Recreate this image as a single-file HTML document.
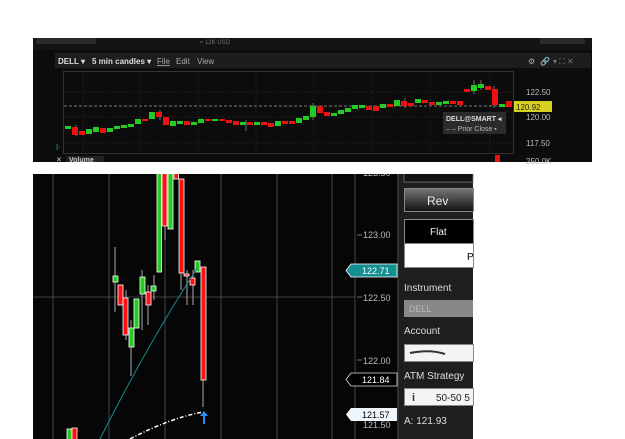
<!DOCTYPE html>
<html><head><meta charset="utf-8"><style>
body{margin:0;width:625px;height:439px;background:#fff;position:relative;overflow:hidden;font-family:"Liberation Sans",sans-serif}
.a{position:absolute}
</style></head><body>
<svg class="a" style="left:0;top:0" width="625" height="439" font-family="Liberation Sans, sans-serif">
<!-- bottom panel -->
<rect x="33" y="174" width="440" height="265" fill="#060606"/>
<g stroke="#555" stroke-width="0.8">
<line x1="53" y1="174" x2="53" y2="439"/><line x1="109" y1="174" x2="109" y2="439"/><line x1="165" y1="174" x2="165" y2="439"/><line x1="221" y1="174" x2="221" y2="439"/><line x1="277" y1="174" x2="277" y2="439"/><line x1="332" y1="174" x2="332" y2="439"/>
<line x1="33" y1="297" x2="355" y2="297"/>
</g>
<line x1="355" y1="174" x2="355" y2="439" stroke="#444"/>
<g stroke="#aaa" stroke-width="1">
<line x1="115" y1="247" x2="115" y2="312"/><line x1="131" y1="320" x2="131" y2="376"/><line x1="126" y1="290" x2="126" y2="340"/><line x1="142" y1="270" x2="142" y2="330"/><line x1="148" y1="285" x2="148" y2="325"/><line x1="154" y1="275" x2="154" y2="300"/><line x1="165" y1="180" x2="165" y2="240"/><line x1="181" y1="270" x2="181" y2="290"/><line x1="187" y1="270" x2="187" y2="305"/><line x1="193" y1="270" x2="193" y2="305"/><line x1="203" y1="272" x2="203" y2="407"/>
</g>
<g stroke="#fff" stroke-width="0.8">
<rect x="113" y="276" width="5" height="6" fill="#2c2"/>
<rect x="118" y="285" width="5" height="20" fill="#f11"/>
<rect x="123" y="298" width="5" height="37" fill="#f11"/>
<rect x="129" y="328" width="5" height="19" fill="#2c2"/>
<rect x="134" y="299" width="5" height="29" fill="#2c2"/>
<rect x="140" y="277" width="5" height="17" fill="#2c2"/>
<rect x="146" y="292" width="5" height="13" fill="#f11"/>
<rect x="151" y="286" width="5" height="5" fill="#2c2"/>
<rect x="157" y="168" width="4.5" height="104" fill="#2c2"/>
<rect x="162" y="168" width="5" height="58" fill="#f11"/>
<rect x="168" y="168" width="5" height="61" fill="#2c2"/>
<rect x="174" y="168" width="4.5" height="11" fill="#f11"/>
<rect x="179" y="179" width="5" height="94" fill="#f11"/>
<rect x="184" y="274" width="5" height="2" fill="#f11"/>
<rect x="190" y="278" width="5" height="7" fill="#f11"/>
<rect x="195" y="261" width="5" height="11" fill="#2c2"/>
<rect x="201" y="267" width="5" height="113" fill="#f11"/>
<rect x="67" y="429" width="5" height="12" fill="#2c2"/>
<rect x="72" y="428" width="5" height="12" fill="#f11"/>
</g>
<path d="M100 439 Q150 340 198 267" stroke="#1a8a8a" fill="none" stroke-width="1"/>
<path d="M130 439 Q170 418 203 412" stroke="#fff" fill="none" stroke-width="1.5" stroke-dasharray="4,2,1,2"/>
<path d="M204 411 L200 416 L203 416 L203 424 L205 424 L205 416 L208 416 Z" fill="#2a8ef0"/>
<rect x="356" y="174" width="42" height="265" fill="#060606"/>
<line x1="398" y1="174" x2="398" y2="439" stroke="#555"/>
<g fill="#bbb" font-size="9"><text x="363" y="238">123.00</text><text x="363" y="301">122.50</text><text x="363" y="364">122.00</text><text x="363" y="428">121.50</text><text x="363" y="176">123.50</text></g>
<g stroke="#888" stroke-width="0.8"><line x1="357" y1="235" x2="362" y2="235"/><line x1="357" y1="297" x2="362" y2="297"/><line x1="357" y1="360" x2="362" y2="360"/></g>
<path d="M346 270.5 L351 264 L397 264 L397 277 L351 277 Z" fill="#159090" stroke="#fff" stroke-width="0.8"/>
<text x="362" y="274" font-size="9" fill="#fff">122.71</text>
<path d="M346 379.5 L351 373 L397 373 L397 386 L351 386 Z" fill="#000" stroke="#ddd" stroke-width="0.8"/>
<text x="362" y="383" font-size="9" fill="#fff">121.84</text>
<path d="M346 414.5 L351 408 L397 408 L397 421 L351 421 Z" fill="#eef5fb"/>
<text x="362" y="418" font-size="9" fill="#000">121.57</text>
<!-- right panel -->
<rect x="399" y="174" width="74" height="265" fill="#1e1e1e"/>
<rect x="404" y="170" width="69" height="12" fill="#111" stroke="#777" stroke-width="0.8"/>
<defs><linearGradient id="g" x1="0" y1="0" x2="0" y2="1"><stop offset="0" stop-color="#777"/><stop offset="1" stop-color="#111"/></linearGradient></defs>
<rect x="404.5" y="188.5" width="69" height="23" fill="url(#g)" stroke="#888"/>
<text x="427" y="205" font-size="12" fill="#eee">Rev</text>
<rect x="404.5" y="219.5" width="69" height="24" fill="#000" stroke="#888"/>
<text x="430" y="235" font-size="10" fill="#eee">Flat</text>
<rect x="404.5" y="243.5" width="69" height="24" fill="#fff" stroke="#888"/>
<text x="467" y="260" font-size="10" fill="#000">P</text>
<text x="404" y="291" font-size="10" fill="#ddd">Instrument</text>
<rect x="404" y="300" width="69" height="17" fill="#888"/>
<text x="409" y="312" font-size="9" fill="#bbb">DELL</text>
<text x="404" y="334" font-size="10" fill="#ddd">Account</text>
<rect x="404.5" y="344.5" width="69" height="17" fill="#f4f4f4" stroke="#888"/>
<path d="M410 353 Q430 349 445 354" stroke="#333" stroke-width="2" fill="none"/>
<text x="404" y="379" font-size="10" fill="#ddd">ATM Strategy</text>
<rect x="404.5" y="388.5" width="69" height="17" fill="#f4f4f4" stroke="#888"/>
<text x="412" y="401" font-size="11" font-weight="bold" fill="#333">i</text>
<text x="436" y="401" font-size="10" fill="#222">50-50  5</text>
<text x="404" y="424" font-size="10" fill="#ddd">A:  121.93</text>
<!-- white gap -->
<rect x="0" y="162" width="625" height="12" fill="#fff"/>
<!-- top panel -->
<rect x="33" y="38" width="559" height="124" fill="#0c0c0c"/>
<rect x="33" y="38" width="559" height="12" fill="#141414"/>
<rect x="36" y="38" width="60" height="6" rx="2" fill="#2a2a2a"/>
<rect x="540" y="38" width="45" height="6" rx="2" fill="#2a2a2a"/>
<text x="200" y="44" font-size="6" fill="#777">≈ 12K USD</text>
<rect x="55" y="53" width="536" height="15" fill="#1d1d1d"/>
<text x="58" y="64" font-size="8" font-weight="bold" fill="#ddd">DELL ▾</text>
<text x="92" y="64" font-size="8" font-weight="bold" fill="#ddd">5 min candles ▾</text>
<text x="157" y="64" font-size="8" fill="#aaa" text-decoration="underline">File</text>
<text x="176" y="64" font-size="8" fill="#aaa">Edit</text>
<text x="197" y="64" font-size="8" fill="#aaa">View</text>
<text x="528" y="64" font-size="8" fill="#aaa">⚙</text>
<text x="540" y="64" font-size="8" fill="#4c4">🔗</text>
<text x="553" y="64" font-size="8" fill="#777">▾ ⛶ ✕</text>
<rect x="63.5" y="71.5" width="450" height="82" fill="none" stroke="#333"/>
<g stroke="#2a2a2a" stroke-dasharray="1,2">
<line x1="83" y1="72" x2="83" y2="153"/><line x1="140" y1="72" x2="140" y2="153"/><line x1="198" y1="72" x2="198" y2="153"/><line x1="256" y1="72" x2="256" y2="153"/><line x1="314" y1="72" x2="314" y2="153"/><line x1="372" y1="72" x2="372" y2="153"/><line x1="430" y1="72" x2="430" y2="153"/><line x1="490" y1="72" x2="490" y2="153"/>
<line x1="64" y1="92" x2="513" y2="92"/><line x1="64" y1="117" x2="513" y2="117"/><line x1="64" y1="143" x2="513" y2="143"/>
</g>
<line x1="64" y1="106" x2="513" y2="106" stroke="#777" stroke-dasharray="3,2"/>
<g stroke="#999" stroke-width="0.7">
<line x1="76" y1="125" x2="76" y2="136"/><line x1="160" y1="110" x2="160" y2="120"/><line x1="313" y1="103" x2="313" y2="120"/><line x1="246" y1="120" x2="246" y2="131"/><line x1="474" y1="80" x2="474" y2="94"/><line x1="481" y1="80" x2="481" y2="90"/><line x1="494" y1="86" x2="494" y2="108"/><line x1="405" y1="98" x2="405" y2="108"/>
</g>
<g>
<rect x="65" y="126" width="6" height="3" fill="#2c2"/>
<rect x="72" y="127" width="6" height="8" fill="#e11"/>
<rect x="79" y="131" width="6" height="4" fill="#e11"/>
<rect x="86" y="129" width="6" height="5" fill="#2c2"/>
<rect x="93" y="127" width="6" height="5" fill="#2c2"/>
<rect x="100" y="128" width="6" height="5" fill="#e11"/>
<rect x="107" y="128" width="6" height="4" fill="#2c2"/>
<rect x="114" y="126" width="6" height="3" fill="#2c2"/>
<rect x="121" y="125" width="6" height="3" fill="#2c2"/>
<rect x="128" y="124" width="6" height="3" fill="#2c2"/>
<rect x="135" y="119" width="6" height="5" fill="#2c2"/>
<rect x="142" y="119" width="6" height="2" fill="#e11"/>
<rect x="149" y="112" width="6" height="7" fill="#2c2"/>
<rect x="156" y="112" width="6" height="5" fill="#e11"/>
<rect x="163" y="117" width="6" height="8" fill="#e11"/>
<rect x="170" y="121" width="6" height="5" fill="#2c2"/>
<rect x="177" y="121" width="6" height="3" fill="#2c2"/>
<rect x="184" y="121" width="6" height="4" fill="#e11"/>
<rect x="191" y="122" width="6" height="3" fill="#2c2"/>
<rect x="198" y="119" width="6" height="4" fill="#2c2"/>
<rect x="205" y="119" width="6" height="2" fill="#e11"/>
<rect x="212" y="119" width="6" height="2" fill="#2c2"/>
<rect x="219" y="119" width="6" height="2" fill="#e11"/>
<rect x="226" y="120" width="6" height="3" fill="#e11"/>
<rect x="233" y="121" width="6" height="4" fill="#e11"/>
<rect x="240" y="122" width="6" height="3" fill="#2c2"/>
<rect x="247" y="122" width="6" height="3" fill="#e11"/>
<rect x="254" y="122" width="6" height="3" fill="#2c2"/>
<rect x="261" y="122" width="6" height="3" fill="#e11"/>
<rect x="268" y="123" width="6" height="4" fill="#e11"/>
<rect x="275" y="121" width="6" height="5" fill="#2c2"/>
<rect x="282" y="121" width="6" height="3" fill="#e11"/>
<rect x="289" y="121" width="6" height="3" fill="#e11"/>
<rect x="296" y="118" width="6" height="5" fill="#2c2"/>
<rect x="303" y="116" width="6" height="4" fill="#2c2"/>
<rect x="310" y="106" width="6" height="11" fill="#2c2"/>
<rect x="317" y="106" width="6" height="7" fill="#e11"/>
<rect x="324" y="112" width="6" height="4" fill="#e11"/>
<rect x="331" y="113" width="6" height="3" fill="#2c2"/>
<rect x="338" y="110" width="6" height="4" fill="#2c2"/>
<rect x="345" y="108" width="6" height="4" fill="#2c2"/>
<rect x="352" y="105" width="6" height="4" fill="#2c2"/>
<rect x="359" y="105" width="6" height="3" fill="#2c2"/>
<rect x="366" y="106" width="6" height="4" fill="#e11"/>
<rect x="373" y="106" width="6" height="5" fill="#e11"/>
<rect x="380" y="104" width="6" height="4" fill="#2c2"/>
<rect x="387" y="104" width="6" height="3" fill="#e11"/>
<rect x="394" y="100" width="6" height="6" fill="#2c2"/>
<rect x="401" y="101" width="6" height="5" fill="#e11"/>
<rect x="408" y="103" width="6" height="3" fill="#e11"/>
<rect x="415" y="99" width="6" height="4" fill="#2c2"/>
<rect x="422" y="100" width="6" height="3" fill="#e11"/>
<rect x="429" y="102" width="6" height="3" fill="#e11"/>
<rect x="436" y="102" width="6" height="3" fill="#2c2"/>
<rect x="443" y="101" width="6" height="3" fill="#2c2"/>
<rect x="450" y="101" width="6" height="3" fill="#e11"/>
<rect x="457" y="101" width="6" height="4" fill="#e11"/>
<rect x="464" y="89" width="6" height="3" fill="#e11"/>
<rect x="471" y="85" width="6" height="6" fill="#2c2"/>
<rect x="478" y="84" width="6" height="4" fill="#2c2"/>
<rect x="485" y="86" width="6" height="4" fill="#e11"/>
<rect x="492" y="89" width="6" height="16" fill="#e11"/>
<rect x="499" y="104" width="6" height="3" fill="#2c2"/>
<rect x="506" y="101" width="6" height="6" fill="#e11"/>
</g>
<g fill="#bbb" font-size="8"><text x="526" y="95">122.50</text><text x="526" y="120">120.00</text><text x="526" y="146">117.50</text><text x="526" y="164">250.0K</text></g>
<rect x="514" y="101" width="38" height="11" fill="#d8d020"/>
<text x="516" y="110" font-size="8" fill="#222">120.92</text>
<rect x="443" y="112" width="63" height="22" fill="#2b2b2b"/>
<text x="446" y="121" font-size="7" font-weight="bold" fill="#ddd">DELL@SMART ◂</text>
<text x="446" y="131" font-size="7" fill="#bbb">‒ ‒ Prior Close ▪</text>
<text x="56" y="150" font-size="8" fill="#39c">I·</text>
<text x="56" y="162" font-size="7" fill="#ccc">✕</text>
<rect x="66" y="156" width="38" height="6" fill="#222"/>
<text x="69" y="162" font-size="7" font-weight="bold" fill="#ccc">Volume</text>
<rect x="495" y="155" width="5" height="7" fill="#e11"/>
</svg>
</body></html>
